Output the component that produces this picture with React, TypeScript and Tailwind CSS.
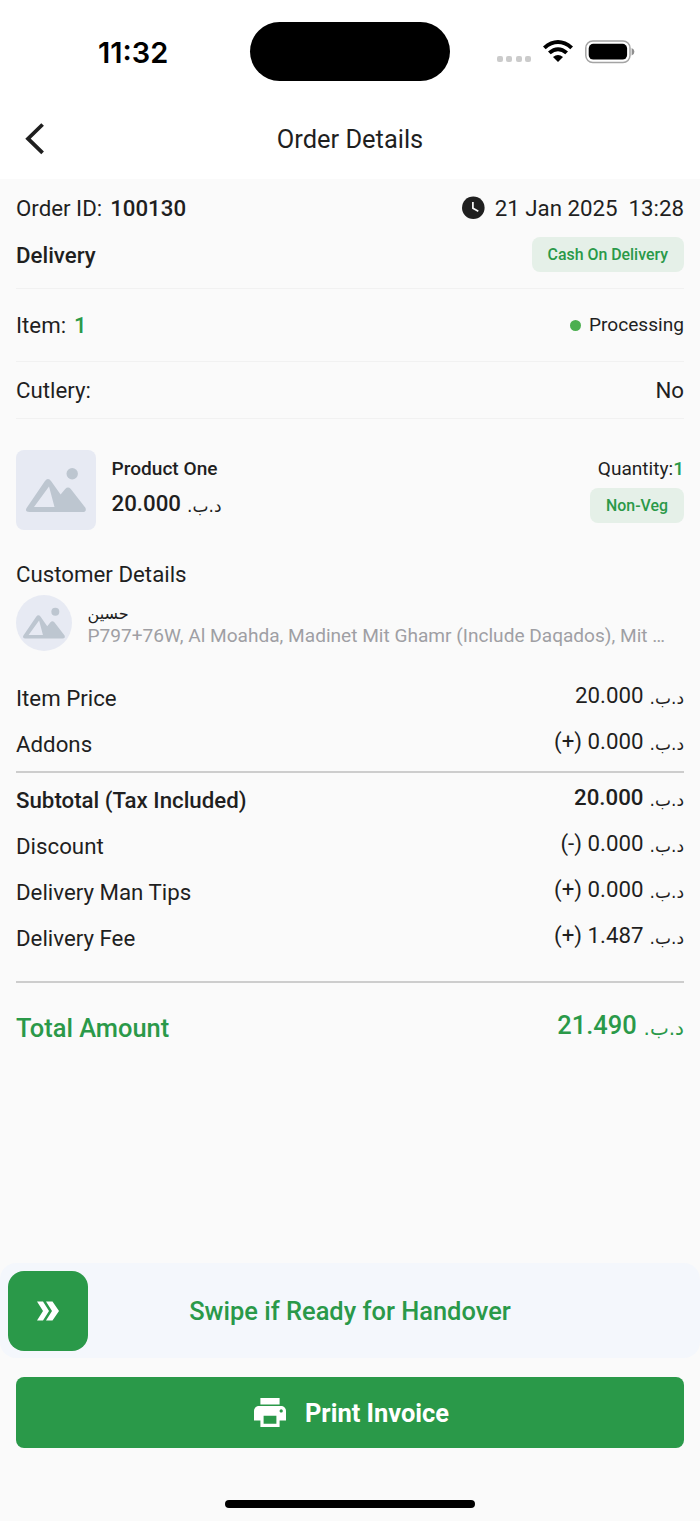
import React from "react";

type PriceProps = { value: string; sign?: string; large?: boolean };

function Price({ value, sign, large = false }: PriceProps) {
  return (
    <span className="flex items-baseline whitespace-pre">
      <span>{sign ? `${sign} ${value} ` : `${value} `}</span>
      <span
        dir="rtl"
        className={
          large
            ? "relative top-[1px] inline-block w-[41px] text-right font-['DejaVu_Sans'] text-[20px] leading-none font-normal"
            : "relative top-[1px] inline-block w-[35px] text-right font-['DejaVu_Sans'] text-[17px] leading-none font-normal"
        }
      >
        د.ب.
      </span>
    </span>
  );
}

function Placeholder({ className }: { className: string }) {
  return (
    <svg viewBox="0 0 80 80" className={className}>
      <circle cx="56.2" cy="23.8" r="5.7" fill="#bdc6d0" />
      <path
        fillRule="evenodd"
        d="M10.6 58 28.8 31.2Q32 27 35.2 31.2L44.6 44.5 49.2 38.9Q52 36 54.8 38.9L69.4 57.8Q71 62 66.5 62H13.5Q8.5 62 10.6 58ZM18 57H38.5L33 36.5Z"
        fill="#bdc6d0"
      />
    </svg>
  );
}

type RowProps = { label: string; value: string; sign?: string; bold?: boolean };

function CostRow({ label, value, sign, bold = false }: RowProps) {
  return (
    <div className={bold ? "flex h-[46px] justify-between font-medium" : "flex h-[46px] justify-between"}>
      <span className="pt-[10px]">{label}</span>
      <span className="pt-[7px]">
        <Price value={value} sign={sign} />
      </span>
    </div>
  );
}

export default function App() {
  return (
    <div className="flex h-[1521px] w-[700px] flex-col bg-[#fafafa] font-['Roboto',sans-serif] text-[22.27px] leading-[26px] text-[#1f1f1f]">
      <header className="h-[179px] bg-white">
        <div className="flex h-[103px] items-center">
          <div className="w-[250px] pt-[2px] pl-[98px] font-['Inter',sans-serif] text-[29px] leading-[32px] font-semibold text-black">
            11:32
          </div>
          <div className="h-[59px] w-[200px] rounded-full bg-black" />
          <div className="flex items-center pl-[46.5px]">
            <div className="flex gap-[3.6px] pt-[15px]">
              <i className="size-[6px] rounded-[2px] bg-[#cbcbcb]" />
              <i className="size-[6px] rounded-[2px] bg-[#cbcbcb]" />
              <i className="size-[6px] rounded-[2px] bg-[#cbcbcb]" />
              <i className="size-[6px] rounded-[2px] bg-[#cbcbcb]" />
            </div>
            <svg viewBox="0 0 30 22" className="mb-[1px] ml-[12px] h-[22px] w-[30px]">
              <path d="M0 6.4Q15-6.4 30 6.4L27.3 9.2Q15-1 2.7 9.2Z" />
              <path d="M5 11.5Q15 3 25 11.5L22.3 14.3Q15 8 7.7 14.3Z" />
              <path d="M10 17Q15 12.8 20 17L15 22Z" />
            </svg>
            <svg viewBox="0 0 50 24" className="ml-[12px] h-[24px] w-[50px]">
              <rect x="0.8" y="0.9" width="44.2" height="21.6" rx="7" fill="none" stroke="#a4a4a4" strokeWidth="1.5" />
              <rect x="3.7" y="3.8" width="38.4" height="15.8" rx="4.6" />
              <path d="M46.6 8Q49.4 9 49.4 11.8T46.6 15.6Z" fill="#8f8f8f" />
            </svg>
          </div>
        </div>
        <div className="grid h-[71px] grid-cols-[1fr_auto_1fr] items-center">
          <svg viewBox="0 0 20 32" className="ml-[25px] h-[32px] w-[20px]">
            <path d="M17.6 1.5 3 15.7 17.6 29.9" fill="none" stroke="#1f1f1f" strokeWidth="3.8" />
          </svg>
          <h1 className="text-[25.45px] leading-[30px] font-normal">Order Details</h1>
        </div>
      </header>

      <main className="px-4">
        <div className="flex h-[58px] items-center justify-between">
          <div className="flex gap-[8px]">
            Order ID: <b className="font-medium">100130</b>
          </div>
          <div className="flex items-center whitespace-pre">
            <svg viewBox="0 0 24 24" className="mr-[10px] size-[24px]">
              <circle cx="12.3" cy="11.7" r="11.3" fill="#1f1f1f" />
              <path d="M11.9 5.9V12.2L17.3 15.3" fill="none" stroke="#fafafa" strokeWidth="1.7" />
            </svg>
            21 Jan 2025  13:28
          </div>
        </div>
        <div className="flex h-[52px] items-start justify-between border-b border-[#f1f1f1]">
          <span className="pt-[5px] font-medium">Delivery</span>
          <span className="flex h-[35px] items-center rounded-lg bg-[#e5f0e8] px-4 text-[15.9px] font-medium text-[#2a9949]">
            Cash On Delivery
          </span>
        </div>
        <div className="flex h-[73px] items-center justify-between border-b border-[#f1f1f1]">
          <span className="flex gap-[8px]">
            Item: <b className="font-medium text-[#2a9949]">1</b>
          </span>
          <span className="flex items-center text-[19.1px]">
            <i className="mr-[8px] size-[11px] rounded-full bg-[#4caf50]" />
            Processing
          </span>
        </div>
        <div className="flex h-[57px] items-center justify-between border-b border-[#f1f1f1]">
          <span>Cutlery:</span>
          <span>No</span>
        </div>

        <section className="mt-[31px] flex h-[80px]">
          <div className="size-[80px] overflow-hidden rounded-lg bg-[#e7eaf3]">
            <Placeholder className="size-full" />
          </div>
          <div className="ml-[15.5px] flex-1">
            <div className="pt-[6px] text-[19.1px] font-medium">Product One</div>
            <div className="pt-[8px] font-medium">
              <Price value="20.000" />
            </div>
          </div>
          <div className="flex flex-col items-end">
            <div className="pt-[6px] text-[19.1px]">
              Quantity:<b className="font-medium text-[#2a9949]">1</b>
            </div>
            <span className="mt-[6px] flex h-[35px] items-center rounded-lg bg-[#e5f0e8] px-4 text-[15.9px] font-medium text-[#2a9949]">
              Non-Veg
            </span>
          </div>
        </section>

        <h2 className="mt-[31px] font-normal">Customer Details</h2>
        <section className="mt-[8px] flex h-[56px]">
          <div className="size-[56px] shrink-0 overflow-hidden rounded-full bg-[#e7eaf3]">
            <Placeholder className="size-full" />
          </div>
          <div className="ml-[15.5px] min-w-0 flex-1 pt-[7px]">
            <div className="h-[21px] font-['DejaVu_Sans'] text-[16px] leading-[23px]">حسين</div>
            <div className="truncate text-[19.08px] leading-[26px] text-[#9f9fa4]">
              P797+76W, Al Moahda, Madinet Mit Ghamr (Include Daqados), Mit …
            </div>
          </div>
        </section>

        <section className="mt-[24px] h-[98px] border-b-2 border-[#cdcdcd]">
          <CostRow label="Item Price" value="20.000" />
          <CostRow label="Addons" value="0.000" sign="(+)" />
        </section>
        <section className="mt-[4px] h-[206px] border-b-2 border-[#cdcdcd]">
          <CostRow label="Subtotal (Tax Included)" value="20.000" bold />
          <CostRow label="Discount" value="0.000" sign="(-)" />
          <CostRow label="Delivery Man Tips" value="0.000" sign="(+)" />
          <CostRow label="Delivery Fee" value="1.487" sign="(+)" />
        </section>
        <div className="flex justify-between pt-[27px] text-[25.45px] leading-[30px] font-medium text-[#2a9949]">
          <span className="pt-[3px]">Total Amount</span>
          <Price value="21.490" large />
        </div>
      </main>

      <footer className="mt-auto h-[258px]">
        <div className="flex h-[95px] items-center rounded-[16px] bg-[#f4f7fc] px-2">
          <div className="flex size-[80px] items-center justify-center rounded-[16px] bg-[#2a9949]">
            <svg viewBox="0 0 22 20" className="h-[20px] w-[22px]" fill="#fff">
              <path d="M0 .5H6L12 10 6 19.5H0L6 10ZM9 .5H15.5L22 10 15.5 19.5H9L15 10Z" />
            </svg>
          </div>
          <span className="flex-1 pr-[80px] text-center text-[25.45px] leading-[30px] font-medium text-[#2a9949]">
            Swipe if Ready for Handover
          </span>
        </div>
        <button className="mx-4 mt-[19px] flex h-[71px] w-[668px] items-center justify-center rounded-lg bg-[#2a9949] pl-[3px] text-[25.45px] leading-[30px] font-bold text-white">
          <svg viewBox="2 3 20 18" className="mr-[19px] h-[29px] w-[32px]" fill="#fff" preserveAspectRatio="none">
            <path d="M19 8H5c-1.66 0-3 1.34-3 3v6h4v4h12v-4h4v-6c0-1.66-1.34-3-3-3zm-3 11H8v-5h8v5zm3-7c-.55 0-1-.45-1-1s.45-1 1-1 1 .45 1 1-.45 1-1 1zm-1-9H6v4h12V3z" />
          </svg>
          Print Invoice
        </button>
        <div className="mx-auto mt-[52px] h-[8px] w-[250px] rounded-full bg-black" />
      </footer>
    </div>
  );
}
